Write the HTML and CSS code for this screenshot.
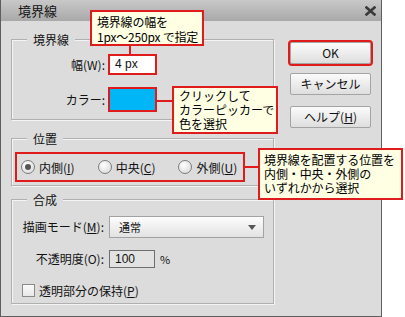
FILE: index.html
```html
<!DOCTYPE html>
<html lang="ja">
<head>
  <meta charset="UTF-8">
  <title>境界線</title>
  <link rel="stylesheet" href="styles.css">
</head>
<body>
  <div class="page">
    <div class="dialog">
      <div class="titlebar">
        <span class="title">境界線</span>
        <svg class="close" width="11" height="10" viewBox="0 0 11 10">
          <path d="M1.5 1.5 L9.5 8.5 M9.5 1.5 L1.5 8.5" stroke="#3a3a3a" stroke-width="2.6" stroke-linecap="square"/>
        </svg>
      </div>
      <div class="main">
        <div class="groups">
          <div class="group group-stroke">
            <div class="legend">境界線</div>
            <div class="field">
              <span class="label">幅(W):</span>
              <div class="textbox hl">4 px</div>
            </div>
            <div class="field field-color">
              <span class="label">カラー:</span>
              <div class="swatch hl"></div>
            </div>
          </div>

          <div class="group group-pos">
            <div class="legend">位置</div>
            <div class="radios hl">
              <label class="radio"><span class="dot checked"></span><span>内側(<u>I</u>)</span></label>
              <label class="radio"><span class="dot"></span><span>中央(<u>C</u>)</span></label>
              <label class="radio"><span class="dot"></span><span>外側(<u>U</u>)</span></label>
            </div>
          </div>

          <div class="group group-blend">
            <div class="legend">合成</div>
            <div class="field">
              <span class="label label-narrow">描画モード(<u>M</u>):</span>
              <div class="select">
                <span>通常</span>
                <span class="arrow"></span>
              </div>
            </div>
            <div class="field field-opacity">
              <span class="label label-narrow">不透明度(O):</span>
              <div class="numbox">100</div>
              <span class="unit">%</span>
            </div>
            <label class="check"><span class="box"></span><span>透明部分の保持(<u>P</u>)</span></label>
          </div>
        </div>

        <div class="buttons">
          <div class="btn hl">OK</div>
          <div class="btn">キャンセル</div>
          <div class="btn btn-help">ヘルプ(<u>H</u>)</div>
        </div>
      </div>
    </div>

    <!-- annotations -->
    <div class="callout callout-width">境界線の幅を<br>1px～250px で指定</div>
    <div class="callout callout-color">クリックして<br>カラーピッカーで<br>色を選択</div>
    <div class="callout callout-pos">境界線を配置する位置を<br>内側・中央・外側の<br>いずれかから選択</div>
    <div class="link link-width"></div>
    <div class="link link-color"></div>
    <div class="link link-pos"></div>
  </div>
</body>
</html>
```

FILE: styles.css
```css
body {
  margin: 0;
  background: #fff;
  font-family: "Noto Sans CJK JP", "Liberation Sans", sans-serif;
  font-size: 12px;
  color: #111;
}
.page {
  position: relative;
  width: 405px;
  height: 317px;
  overflow: hidden;
}
.dialog {
  width: 382px;
  height: 317px;
  box-sizing: border-box;
  border: 1px solid #5e5e5e;
  border-top: none;
  background: #dcdcdc;
  display: flex;
  flex-direction: column;
}
.titlebar {
  height: 21px;
  flex: none;
  background: linear-gradient(#c8c8c8, #a9a9a9);
  display: flex;
  align-items: center;
  justify-content: space-between;
  padding: 0 5px 0 17px;
}
.title {
  font-size: 13px;
  line-height: 21px;
}
.close {
  display: block;
}
.main {
  display: flex;
  padding: 18px 0 0 10px;
}
.groups {
  width: 263px;
}
.group {
  box-sizing: border-box;
  border: 1px solid #b0b0b0;
  box-shadow: 1px 1px 0 #f4f4f4, inset 1px 1px 0 #f4f4f4;
}
.legend {
  width: fit-content;
  margin: -8px 0 0 15px;
  padding: 0 6px;
  background: #dcdcdc;
  line-height: 15px;
  font-size: 12px;
}
.group-stroke {
  height: 81px;
}
.group-pos {
  height: 48px;
  margin-top: 18px;
}
.group-blend {
  height: 105px;
  margin-top: 13px;
}
.field {
  display: flex;
  align-items: center;
  gap: 5px;
  white-space: nowrap;
}
.group-stroke .field {
  margin-top: 9px;
}
.group-stroke .field-color {
  margin-top: 16px;
}
.label {
  flex: none;
  width: 93px;
  text-align: right;
  line-height: 14px;
}
.label-narrow {
  width: 92px;
}
.hl {
  outline: 2px solid #e01b1b;
}
.textbox {
  width: 45px;
  height: 17px;
  box-sizing: border-box;
  background: #fff;
  padding-left: 5px;
  line-height: 17px;
  font-family: "Liberation Sans", sans-serif;
}
.swatch {
  width: 45px;
  height: 21px;
  background: #00b6f6;
}
.radios {
  display: flex;
  align-items: center;
  gap: 23px;
  width: 226px;
  height: 26px;
  box-sizing: border-box;
  margin: 8px 0 0 5px;
  padding-left: 4px;
  white-space: nowrap;
}
.radio {
  flex: none;
  display: flex;
  align-items: center;
  gap: 4px;
}
.dot {
  flex: none;
  width: 12px;
  height: 12px;
  border: 1px solid #7c7c7c;
  border-radius: 50%;
  background: radial-gradient(circle at 40% 35%, #fff, #d4d4d4);
  display: flex;
  align-items: center;
  justify-content: center;
}
.dot.checked::after {
  content: "";
  width: 6px;
  height: 6px;
  border-radius: 50%;
  background: #555;
}
.group-blend .field {
  margin-top: 9px;
}
.group-blend .field-opacity {
  margin-top: 12px;
}
.select {
  flex: none;
  width: 155px;
  height: 22px;
  box-sizing: border-box;
  border: 1px solid #a2a2a2;
  background: linear-gradient(#fdfdfd, #e2e2e2);
  display: flex;
  align-items: center;
  justify-content: space-between;
  padding: 0 7px 0 9px;
  font-size: 11px;
}
.arrow {
  width: 0;
  height: 0;
  border-left: 4px solid transparent;
  border-right: 4px solid transparent;
  border-top: 5px solid #555;
}
.numbox {
  flex: none;
  width: 46px;
  height: 18px;
  box-sizing: border-box;
  border: 1px solid #6e6e6e;
  background: #e2e2e2;
  padding-left: 5px;
  line-height: 16px;
  font-family: "Liberation Sans", sans-serif;
}
.unit {
  font-size: 11px;
}
.check {
  display: flex;
  align-items: center;
  gap: 4px;
  margin: 14px 0 0 10px;
  white-space: nowrap;
}
.box {
  flex: none;
  width: 11px;
  height: 11px;
  border: 1px solid #8a8a8a;
  background: linear-gradient(#fafafa, #e8e8e8);
}
.buttons {
  margin-left: 16px;
  padding-top: 3px;
  width: 81px;
  display: flex;
  flex-direction: column;
  gap: 9px;
}
.btn {
  height: 22px;
  box-sizing: border-box;
  border: 1px solid #a4a4a4;
  border-radius: 2px;
  background: linear-gradient(#fbfbfb, #dedede);
  text-align: center;
  line-height: 20px;
  white-space: nowrap;
}
.btn-help {
  margin-top: 2px;
}
.callout {
  position: absolute;
  box-sizing: border-box;
  border: 2px solid #e01b1b;
  background: #ffffe4;
  color: #000;
  font-size: 12px;
  line-height: 14px;
  padding: 1px 4px 0 5px;
  white-space: nowrap;
  overflow: hidden;
}
.callout-width {
  left: 90px;
  top: 10px;
  width: 114px;
  height: 36px;
  line-height: 15px;
  padding-top: 2px;
  letter-spacing: -0.2px;
}
.callout-color {
  left: 172px;
  top: 86px;
  width: 106px;
  height: 48px;
}
.callout-pos {
  left: 258px;
  top: 148px;
  width: 145px;
  height: 52px;
  padding-top: 3px;
  padding-left: 4px;
  letter-spacing: -0.1px;
}
.link {
  position: absolute;
  background: #e01b1b;
}
.link-width {
  left: 129px;
  top: 45px;
  width: 2px;
  height: 10px;
}
.link-color {
  left: 157px;
  top: 100px;
  width: 15px;
  height: 2px;
}
.link-pos {
  left: 245px;
  top: 166px;
  width: 13px;
  height: 2px;
}
```
